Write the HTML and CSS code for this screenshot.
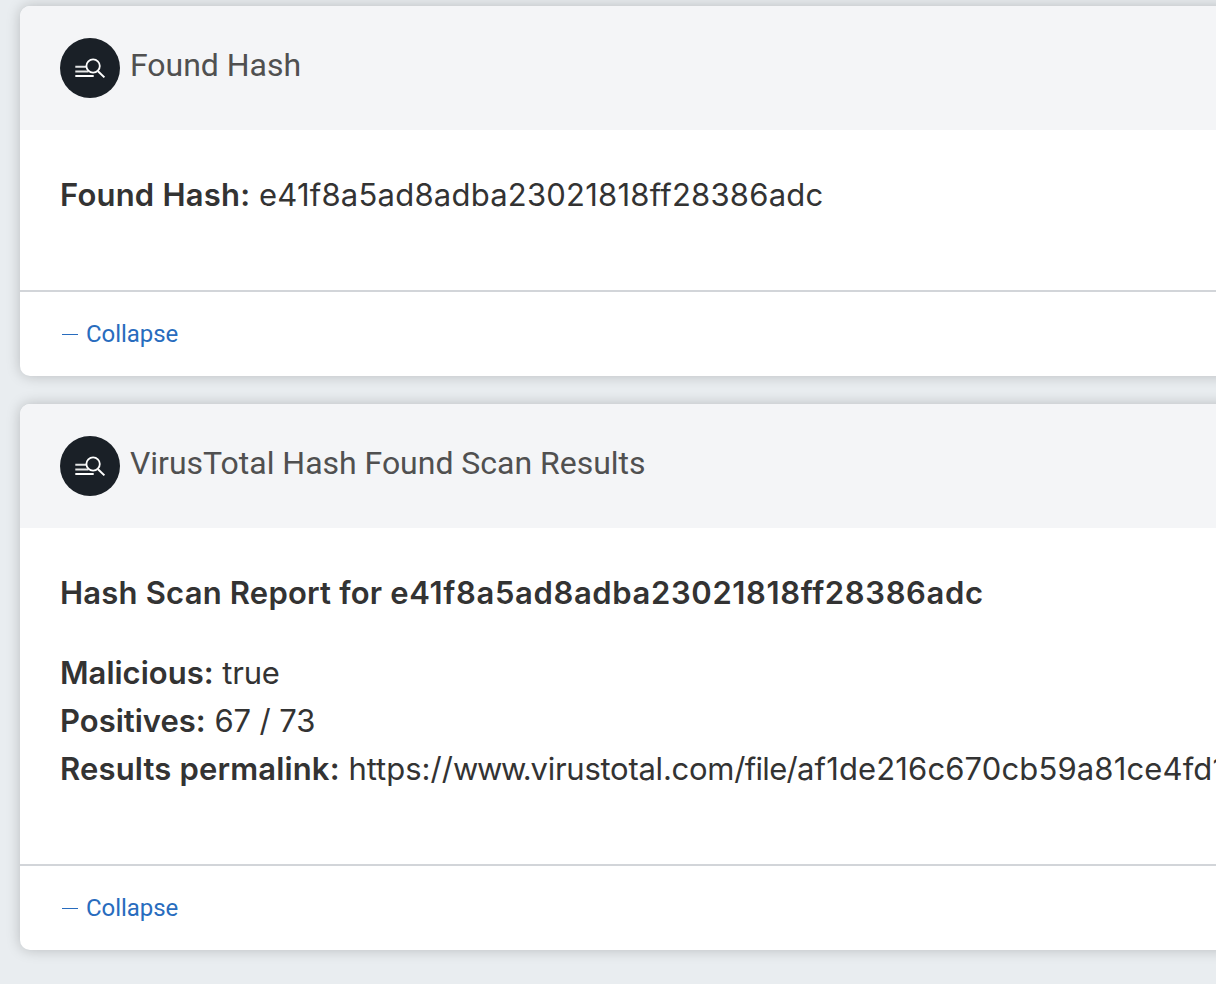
FILE: index.html
```html
<!DOCTYPE html>
<html lang="en">
<head>
<meta charset="utf-8">
<title>Scan Results</title>
<link rel="stylesheet" href="styles.css">
</head>
<body>
<svg class="defs" width="0" height="0" aria-hidden="true">
  <symbol id="search-lines" viewBox="0 0 60 60">
    <circle cx="30" cy="30" r="30" fill="#1a2027"/>
    <g fill="none" stroke="#fff">
      <path d="M15.3 28.7H26M15.3 33.5H28.5" stroke-width="1.9" stroke="#e4e5e6"/>
      <path d="M15.3 38H33.7" stroke-width="2"/>
      <circle cx="33.1" cy="28" r="6.7" stroke-width="1.8"/>
      <path d="M38 33.2L44.4 39.4" stroke-width="2"/>
    </g>
  </symbol>
</svg>
<main class="feed">
  <section class="card">
    <header class="card-header">
      <svg class="card-icon"><use href="#search-lines"/></svg>
      <h2 class="card-title">Found Hash</h2>
    </header>
    <div class="card-body">
      <p class="line"><strong class="label label-wide">Found Hash:</strong> <span class="value-hash">e41f8a5ad8adba23021818ff28386adc</span></p>
    </div>
    <footer class="card-footer"><a class="collapse"><span class="dash"></span>Collapse</a></footer>
  </section>
  <section class="card">
    <header class="card-header">
      <svg class="card-icon"><use href="#search-lines"/></svg>
      <h2 class="card-title">VirusTotal Hash Found Scan Results</h2>
    </header>
    <div class="card-body">
      <p class="line report"><strong class="label label-wide">Hash Scan Report for <span class="report-hash">e41f8a5ad8adba23021818ff28386adc</span></strong></p>
      <p class="line"><strong class="label">Malicious:</strong> <span class="value-true">true</span></p>
      <p class="line"><strong class="label">Positives:</strong> <span class="value-count">67 / 73</span></p>
      <p class="line"><strong class="label label-link">Results permalink:</strong> https://<span class="url-www">www.</span><span class="url-host">virustotal.com</span><span class="url-path">/file/</span><span class="url-hash">af1de216c670cb59a81ce4fd1</span></p>
    </div>
    <footer class="card-footer"><a class="collapse"><span class="dash"></span>Collapse</a></footer>
  </section>
</main>
</body>
</html>
```
FILE: styles.css
```css
* { box-sizing: border-box; }
body {
  margin: 0;
  height: 984px;
  overflow: hidden;
  background: #e9edf0;
  font-family: Roboto, "Liberation Sans", sans-serif;
}
.defs { display: block; }
.feed {
  display: flex;
  flex-direction: column;
  gap: 28px;
  padding: 6px 0 0 20px;
  overflow: hidden;
  height: 984px;
}
.card {
  flex: none;
  margin-right: -30px;
  border-radius: 10px;
  background: #fff;
  box-shadow: 0 0 14px rgba(0, 0, 0, 0.21);
}
.card-header {
  display: flex;
  gap: 10px;
  height: 124px;
  padding: 32px 40px;
  border-radius: 10px 10px 0 0;
  background: #f4f5f7;
}
.card-icon { width: 60px; height: 60px; }
.card-title {
  margin: 7px 0 0;
  color: #505050;
  font-size: 32px;
  font-weight: 400;
  line-height: 40px;
  letter-spacing: -0.02px;
}
.card-body {
  padding: 41px 0 71px 40px;
  overflow: hidden;
  color: #333;
  font-family: Inter, "Liberation Sans", sans-serif;
  font-size: 31px;
}
.line {
  margin: 0;
  line-height: 48px;
  white-space: nowrap;
}
.report { margin-bottom: 32px; }
.label { font-weight: 600; }
.label-wide { letter-spacing: 0.2px; }
.label-link { letter-spacing: 0.15px; }
.value-hash { letter-spacing: 0.23px; }
.value-true { letter-spacing: -0.2px; }
.value-count { letter-spacing: -0.1px; }
.report-hash { letter-spacing: 0.63px; }
.url-www { letter-spacing: -1.3px; }
.url-host { letter-spacing: -0.25px; }
.url-path { letter-spacing: -0.7px; }
.url-hash { letter-spacing: 0.14px; }
.card-footer {
  display: flex;
  align-items: center;
  height: 86px;
  padding: 0 42px;
  border-top: 2px solid #d2d5d9;
}
.collapse {
  display: flex;
  align-items: center;
  gap: 8px;
  color: #286cbe;
  font-size: 24px;
  line-height: 28px;
  letter-spacing: -0.05px;
}
.dash {
  width: 16px;
  height: 1px;
  background: #286cbe;
}
```
